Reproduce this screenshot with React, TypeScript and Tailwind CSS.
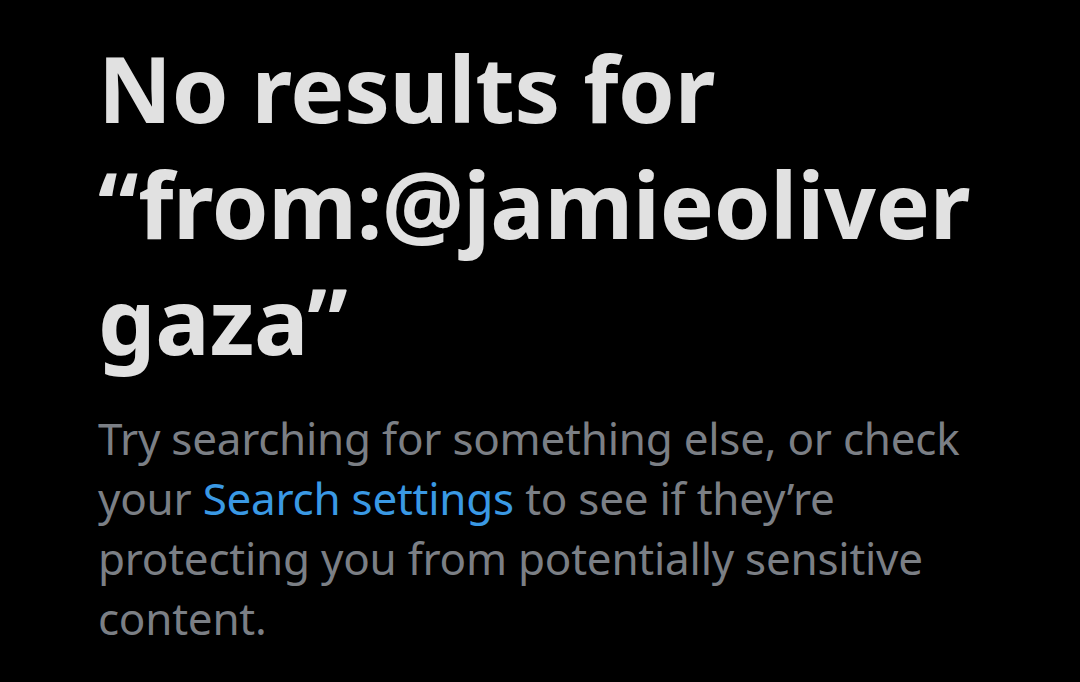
export default function App() {
  return (
    <div className="min-h-screen w-full bg-black" style={{ fontFamily: '"Noto Sans", "Open Sans", Arial, sans-serif' }}>
      <div className="px-[98px] pt-[30px]">
        <h1 className="max-w-[930px] text-[91px] font-bold leading-[116px] tracking-[-0.3px] text-[#e1e1e1]">
          No results for “from:@jamieoliver gaza”
        </h1>
        <p className="mt-[30px] max-w-[900px] text-[44px] leading-[60px] tracking-[-0.25px] text-[#7b7f85]">
          Try searching for something else, or check your{" "}
          <span className="text-[#3a99e4]">Search settings</span> to see if they’re protecting you from
          potentially sensitive content.
        </p>
      </div>
    </div>
  );
}
